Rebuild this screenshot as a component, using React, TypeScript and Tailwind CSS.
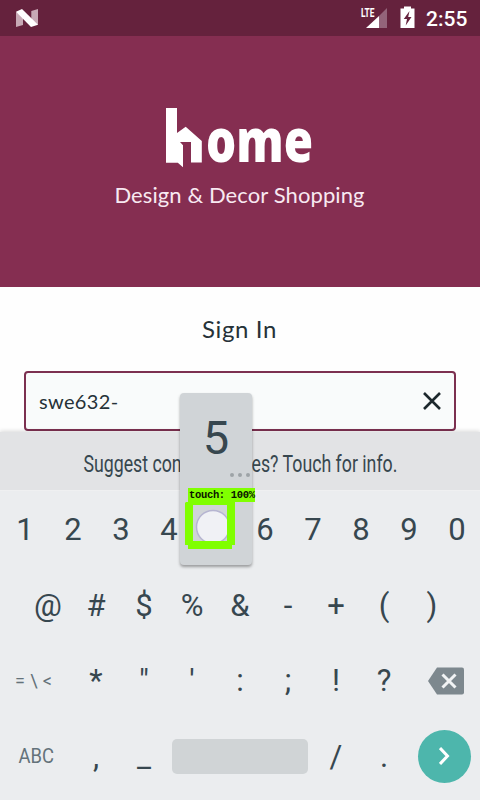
import React from "react";

const KEY = "flex h-full w-12 shrink-0 items-center justify-center";

function Key({ children }: { children: React.ReactNode }) {
  return <div className={KEY}>{children}</div>;
}

function StatusBar() {
  return (
    <div className="flex h-9 items-center justify-between bg-[#65223d] pl-4 pr-[11px] text-white">
      <svg width="22" height="20" viewBox="0 0 22 20">
        <path d="M0 3.7 7 9V17L0 19Z M22 1 15.3 3V12L22 17Z" fill="#c7a9b5" />
        <path d="M0 3.7 6 1 22 16.7 15 19Z" fill="#fff" />
      </svg>
      <div className="flex items-center">
        <svg width="56" height="26" viewBox="0 0 56 26">
          <text x="1" y="11.8" fill="#fff" fontFamily="Roboto, sans-serif" fontWeight="700" fontSize="13.5" textLength="13.5" lengthAdjust="spacingAndGlyphs">LTE</text>
          <path d="M27 3V23H19V11Z" fill="#93647a" />
          <path d="M19 11V23H6Z" fill="#fff" />
          <path d="M40.500 3.500H44V1.500H51V3.500H54.500V23H40.500Z" fill="#fff" />
          <path d="M49.5 6 43.8 14H47L45.7 20.5 51.5 12H48.2Z" fill="#65223d" />
        </svg>
        <span className="ml-2.5 w-[43px] whitespace-nowrap pt-0.5 font-['Roboto',sans-serif] text-[21px] font-medium leading-none">2:55</span>
      </div>
    </div>
  );
}

function Brand() {
  return (
    <header className="flex h-[251px] flex-col items-center bg-[#852e51] pt-[68px] text-white">
      <svg width="152" height="66" viewBox="164 104 152 66">
        <path d="M166 108H177V133L185.7 126.7 201.8 141V162.5H191V142H180L183 145.2V167.3L177.8 162.7H166Z" fill="#fff" />
        <text x="206" y="162" fill="#fff" fontFamily="'Open Sans', sans-serif" fontWeight="800" fontSize="60" textLength="107" lengthAdjust="spacingAndGlyphs">ome</text>
      </svg>
      <p className="mt-[10px] whitespace-nowrap pr-px font-['Lato',sans-serif] text-[22px] leading-[30px] tracking-[0.1px] text-[#f8e9f1]">Design &amp; Decor Shopping</p>
    </header>
  );
}

function SignIn() {
  return (
    <main className="flex h-[145px] flex-col bg-[#fefefe] px-6 pt-[27px] font-['Lato',sans-serif] text-[#263238]">
      <h1 className="pr-px text-center text-2xl leading-[30px] tracking-[0.6px]">Sign In</h1>
      <div className="mt-[27px] flex h-[60px] items-center justify-between rounded-[4px] border-2 border-[#7c3050] bg-[#f9fbfb] pl-[13px] pr-[13px]">
        <span className="text-xl tracking-[0.35px]">swe632-</span>
        <svg width="18" height="18" viewBox="0 0 18 18" stroke="#1d282d" strokeWidth="2.6">
          <path d="M1 1 17 17M17 1 1 17" />
        </svg>
      </div>
    </main>
  );
}

function KeyPreview() {
  return (
    <div className="absolute left-[180px] top-[393px] h-[172px] w-[72px] rounded-[4px] bg-[#d0d4d7] shadow-[0_2px_3px_rgba(0,0,0,0.35)]">
      <div className="pt-[15px] text-center font-['Roboto',sans-serif] text-[47px] leading-[60px] text-[#37474f]">5</div>
      <div className="mr-[2px] mt-[5px] flex justify-end gap-1">
        <i className="h-1 w-1 rounded-full bg-[#9da3a7]" />
        <i className="h-1 w-1 rounded-full bg-[#9da3a7]" />
        <i className="h-1 w-1 rounded-full bg-[#9da3a7]" />
      </div>
      <svg className="absolute left-1 top-[94px]" width="74" height="64" viewBox="184 487 74 64">
        <circle cx="213" cy="527" r="16.5" fill="#f0f1f5" stroke="#b6b5d1" strokeWidth="1.5" />
        <path d="M186 502H188V488H255V502H235V545H232V549H188V545H185V503Z M193 505V541H227V505Z" fill="#80ff00" fillRule="evenodd" />
        <text x="189" y="498" fill="#0a1400" fontFamily="'Liberation Mono', monospace" fontWeight="700" fontSize="10.5" textLength="66">touch: 100%</text>
      </svg>
    </div>
  );
}

function Keyboard() {
  return (
    <section className="h-[368px] bg-[#ebedef] font-['Roboto',sans-serif] text-[31px] leading-none text-[#37474f] shadow-[0_-1px_4px_rgba(0,0,0,0.15)]">
      <div className="flex h-[59px] items-center justify-center border-b border-[#eff0f1] bg-[#e2e3e5] pt-1.5">
        <span className="scale-x-[0.739] whitespace-nowrap text-[24px]">Suggest contact names? Touch for info.</span>
      </div>
      <div className="flex h-[76px] pl-px">
        {["1", "2", "3", "4", "5", "6", "7", "8", "9", "0"].map((k) => <Key key={k}>{k}</Key>)}
      </div>
      <div className="flex h-[76px] px-6">
        {["@", "#", "$", "%", "&", "-", "+", "(", ")"].map((k) => <Key key={k}>{k}</Key>)}
      </div>
      <div className="flex h-[75px] items-center">
        <div className="w-[72px] whitespace-pre pl-[15px] text-[18px] tracking-[0.4px] text-[#64727a]">= \ &lt;</div>
        {["*", "\"", "'", ":", ";", "!", "?"].map((k) => <Key key={k}>{k}</Key>)}
        <svg className="ml-5" width="36" height="28" viewBox="0 0 36 28">
          <path d="M9 .5H34a2 2 0 0 1 2 2V25.5a2 2 0 0 1-2 2H9L0 14Z" fill="#7d888e" />
          <path d="M14.5 7.5 27.5 20.5M27.5 7.5 14.5 20.5" stroke="#f1f3f4" strokeWidth="3" />
        </svg>
      </div>
      <div className="flex h-[76px] items-center">
        <div className="w-[72px] text-center text-[20px] text-[#64727a]"><span className="inline-block scale-x-[0.92]">ABC</span></div>
        <Key>,</Key>
        <Key>_</Key>
        <div className="ml-1 mr-1 h-[35px] w-[136px] rounded-[5px] bg-[#d0d4d6]" />
        <Key>/</Key>
        <Key>.</Key>
        <div className="ml-[10px] flex h-[53px] w-[53px] items-center justify-center rounded-full bg-[#4db6ac]">
          <svg width="12" height="18" viewBox="0 0 12 18" fill="none" stroke="#fff" strokeWidth="3">
            <path d="M1 1 8.5 9 1 17" />
          </svg>
        </div>
      </div>
    </section>
  );
}

export default function App() {
  return (
    <div className="relative flex h-[800px] w-[480px] flex-col overflow-hidden">
      <StatusBar />
      <Brand />
      <SignIn />
      <Keyboard />
      <KeyPreview />
    </div>
  );
}
